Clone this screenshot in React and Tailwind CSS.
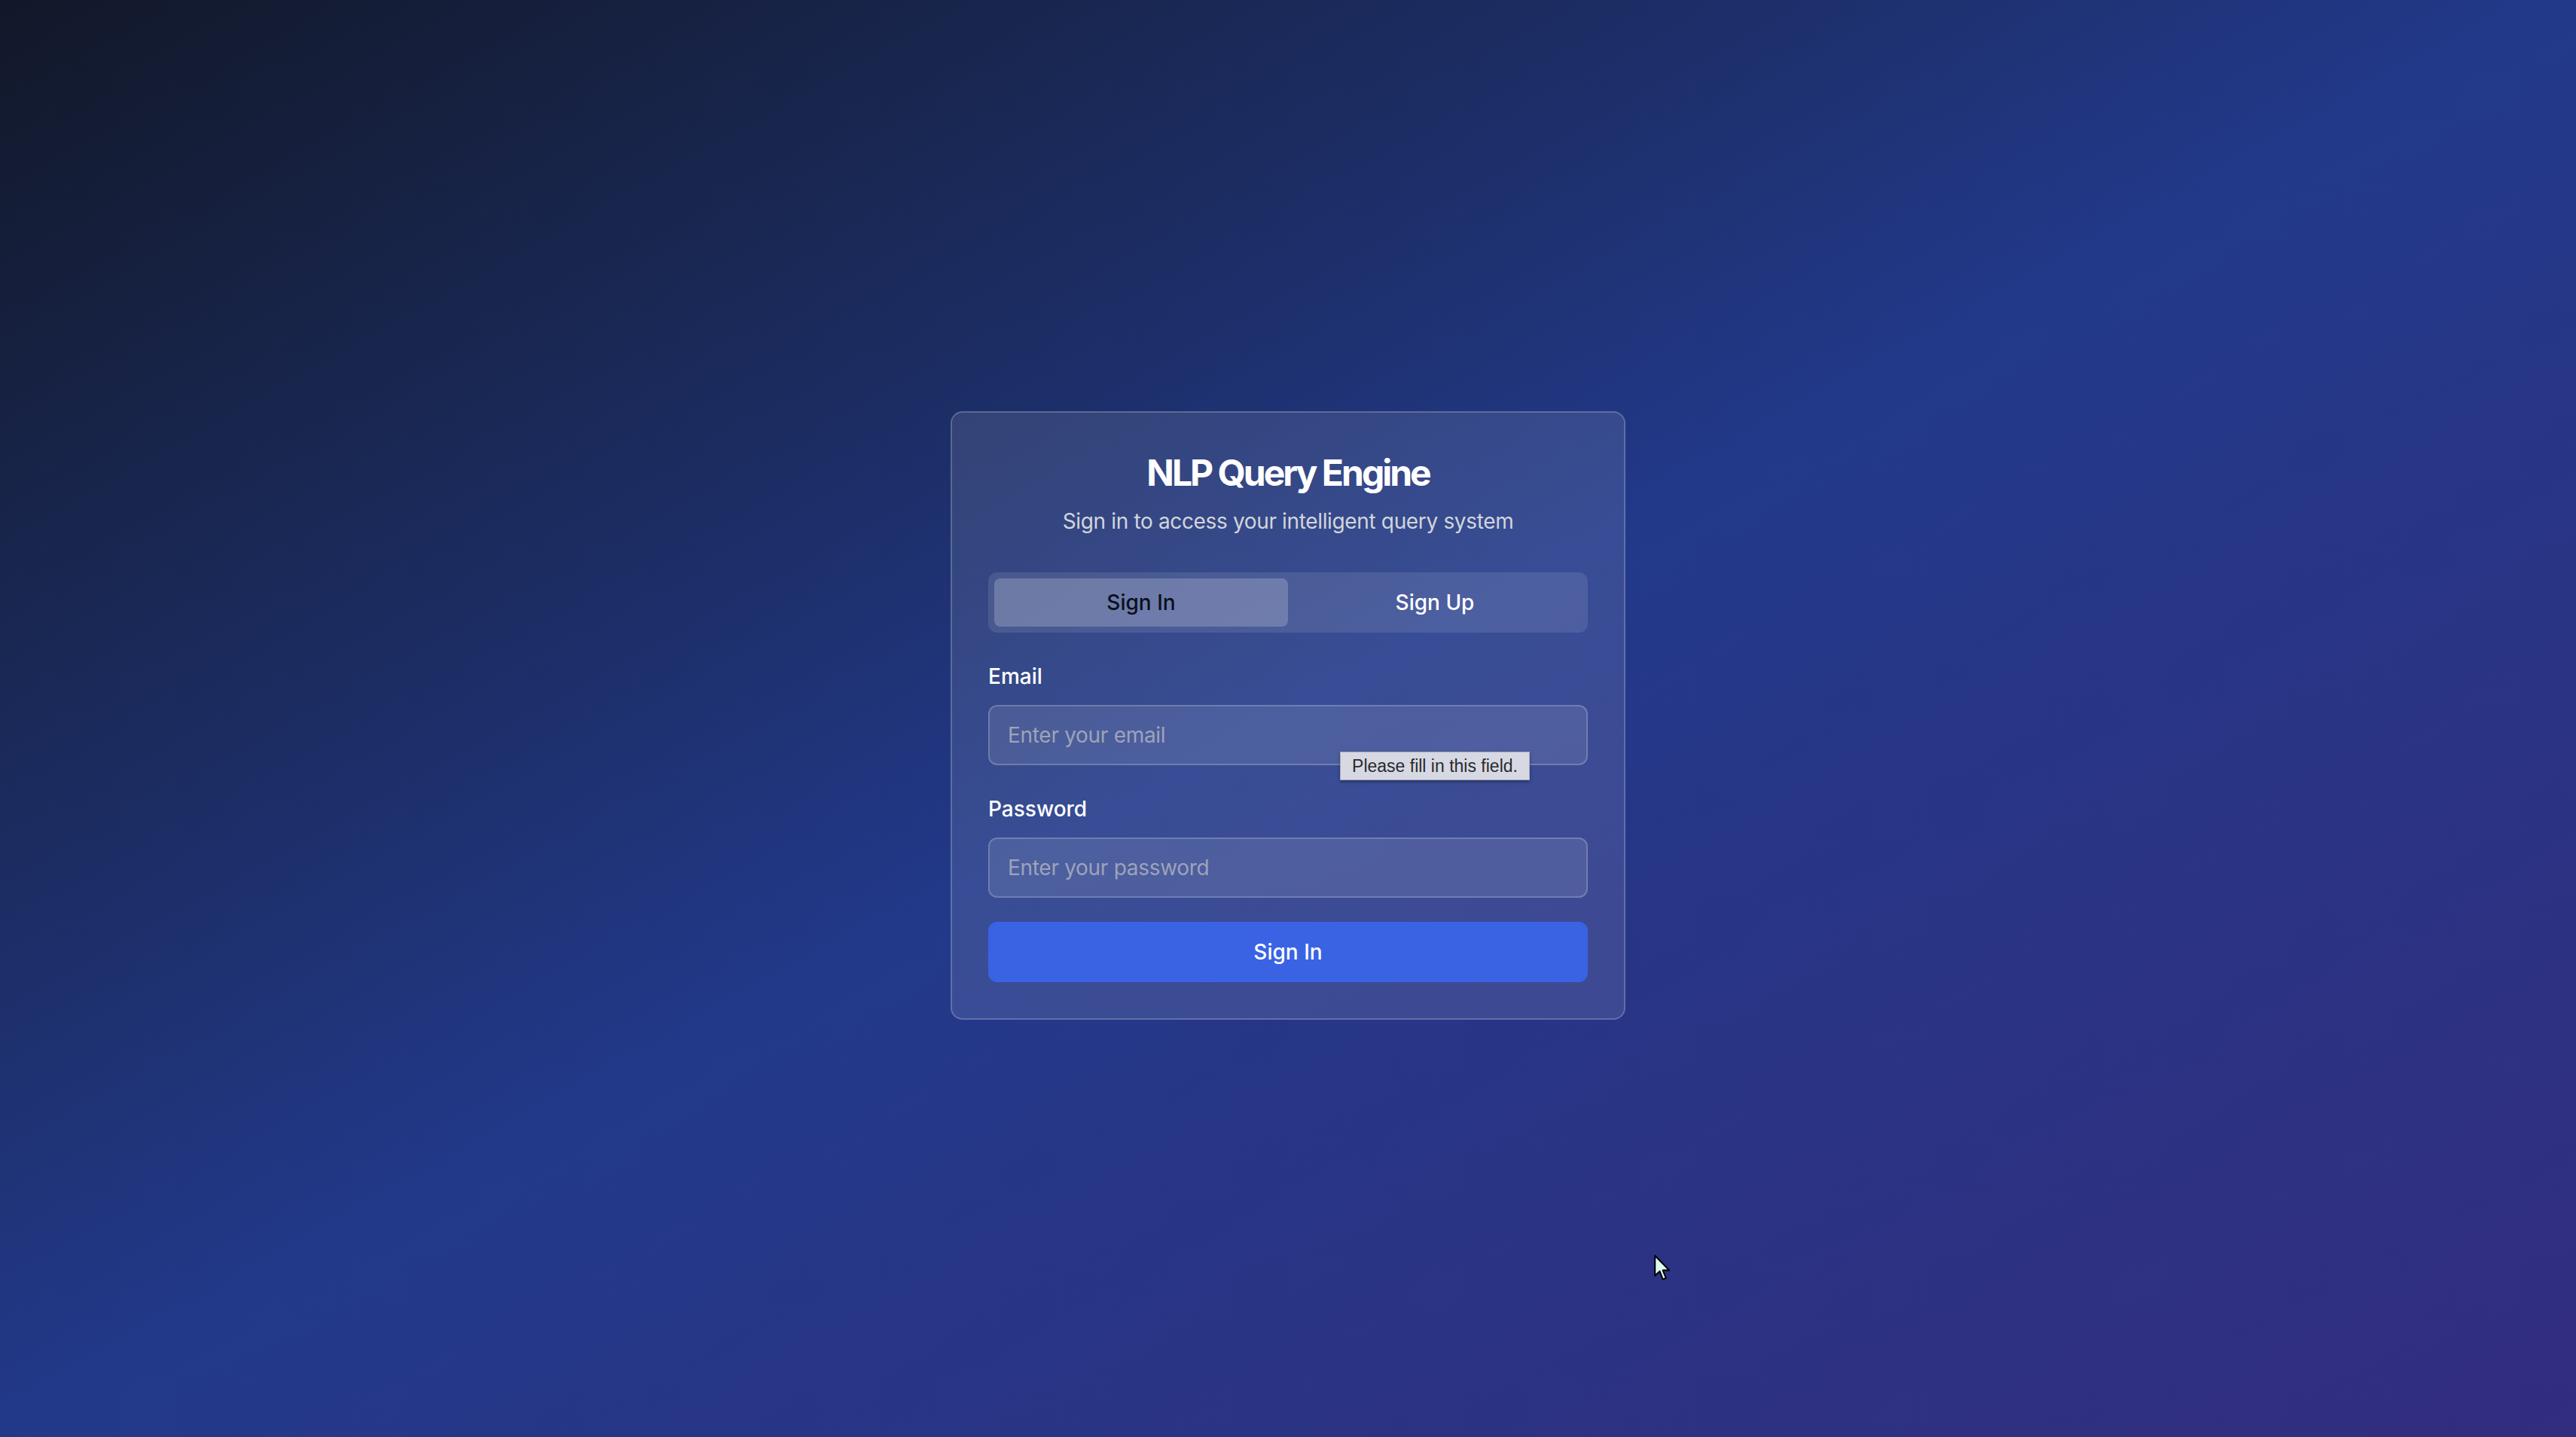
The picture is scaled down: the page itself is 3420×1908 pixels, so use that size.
import React, { useState } from 'react';

// macOS-style pointer, drawn since no icon pack ships it
const Pointer = () => (
    <svg width="24" height="37" viewBox="0 0 13 20" className="absolute left-[2195px] top-[1665px] pointer-events-none">
        <path
            d="M1.2 1.2 L1.2 15.6 L4.6 12.4 L6.9 18.2 L9.1 17.3 L6.8 11.7 L11.4 11.7 Z"
            fill="#defaf0"
            stroke="#000"
            strokeWidth="1.1"
            strokeLinejoin="round"
        />
    </svg>
);

const Field = ({ label, type, placeholder, tip }) => (
    <div className="mt-[38px]">
        <label className="block text-[28px] leading-[40px] font-medium text-white">{label}</label>
        <div className="relative mt-[18px]">
            <input
                type={type}
                placeholder={placeholder}
                className="w-full h-[80px] rounded-[12px] border-2 border-white/20 bg-white/10 px-[24px] text-[28px] tracking-[-0.3px] text-white placeholder:text-[#9ea3ba] outline-none"
            />
            {tip && (
                <div className="absolute left-[467px] top-[62px] h-[38px] w-[252px] flex items-center justify-center bg-[#d6d9e4] border border-[#a9acb8] shadow-[0_2px_4px_rgba(0,0,0,0.35)] text-[23px] text-[#2a2a2a] font-['Liberation_Sans',sans-serif]">
                    {tip}
                </div>
            )}
        </div>
    </div>
);

export default function App() {
    const [tab, setTab] = useState('signin');

    return (
        <div className="relative min-h-screen w-full flex items-center justify-center pb-[8px] bg-linear-to-br from-[#121829] via-[#22398a] to-[#322d7e] font-['Inter',sans-serif]">
            <div className="w-[896px] rounded-[16px] border-2 border-white/20 bg-white/10 p-[48px]">
                <div className="flex flex-col items-center text-center">
                    <h1 className="text-[48px] leading-[64px] font-bold tracking-[-3px] text-white">NLP Query Engine</h1>
                    <p className="mt-[12px] text-[28px] leading-[40px] tracking-[-0.35px] text-gray-300">Sign in to access your intelligent query system</p>
                </div>

                <div className="mt-[48px] h-[80px] rounded-[12px] bg-white/10 p-[8px] grid grid-cols-2">
                    <button
                        onClick={() => setTab('signin')}
                        className={tab === 'signin'
                            ? 'rounded-[8px] bg-white/20 text-[28px] font-medium text-[#0b0f1c]'
                            : 'rounded-[8px] text-[28px] font-medium text-white'}
                    >
                        Sign In
                    </button>
                    <button
                        onClick={() => setTab('signup')}
                        className={tab === 'signup'
                            ? 'rounded-[8px] bg-white/20 text-[28px] font-medium text-[#0b0f1c]'
                            : 'rounded-[8px] text-[28px] font-medium text-white'}
                    >
                        Sign Up
                    </button>
                </div>

                <Field label="Email" type="email" placeholder="Enter your email" tip="Please fill in this field." />
                <Field label="Password" type="password" placeholder="Enter your password" />

                <button className="mt-[32px] w-full h-[80px] rounded-[12px] bg-[#3a63e4] text-[28px] font-medium text-white">
                    Sign In
                </button>
            </div>

            <Pointer />
        </div>
    );
}
